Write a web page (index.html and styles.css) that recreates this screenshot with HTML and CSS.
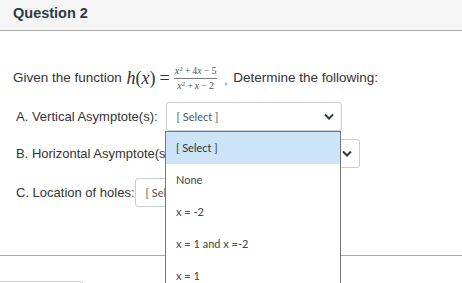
FILE: index.html
```
<!DOCTYPE html>
<html lang="en">
<head>
    <meta charset="UTF-8">
    <title>Question 2</title>
    <link rel="stylesheet" href="styles.css">
</head>
<body>

    <div class="question">
        <div class="question-header">Question 2</div>

        <div class="question-body">
            <p class="statement">Given the function <span class="math"><i>h</i>(<i>x</i>)<b class="eq">=</b></span><span class="frac"><span class="num"><i>x</i><sup>2</sup><b class="op">+</b>4<i>x</i><b class="op">&minus;</b>5</span><span class="den"><i>x</i><sup>2</sup><b class="op">+</b><i>x</i><b class="op">&minus;</b>2</span></span><span class="comma">,</span>Determine the following:</p>

            <div class="row row-a">
                <span class="label">A. Vertical Asymptote(s):</span>
                <div class="select">
                    <span>[ Select ]</span>
                    <svg class="chevron" viewBox="0 0 10 6"><path d="M1 1l4 4 4-4" /></svg>
                </div>
            </div>
            <div class="row row-b">
                <span class="label">B. Horizontal Asymptote(s):</span>
                <div class="select">
                    <span>[ Select ]</span>
                    <svg class="chevron" viewBox="0 0 10 6"><path d="M1 1l4 4 4-4" /></svg>
                </div>
            </div>
            <div class="row row-c">
                <span class="label">C. Location of holes:</span>
                <div class="select">
                    <span>[ Select ]</span>
                    <svg class="chevron" viewBox="0 0 10 6"><path d="M1 1l4 4 4-4" /></svg>
                </div>
            </div>
        </div>
    </div>

    <div class="next-button"></div>

    <!-- open dropdown of the first select -->
    <ul class="dropdown">
        <li class="active">[ Select ]</li>
        <li>None</li>
        <li>x = -2</li>
        <li>x = 1 and x =-2</li>
        <li>x = 1</li>
    </ul>

</body>
</html>
```

FILE: styles.css
```
body {
    margin: 0;
    font-family: "Liberation Sans", Arial, sans-serif;
    color: #333;
    background-color: #fff;
    overflow: hidden;
    height: 283px;
}
.question {
    border-bottom: 1px solid #aaa;
    padding-bottom: 41px;
}
.question-header {
    height: 31px;
    box-sizing: border-box;
    padding: 5px 13px 0;
    background-color: #f5f5f5;
    border-bottom: 1px solid #aaa;
    font-weight: bold;
    font-size: 14.5px;
    color: #2d3b45;
}
.question-body {
    padding: 0 13px;
}
.statement {
    margin: 34px 0 10px;
    height: 26px;
    line-height: 26px;
    font-size: 13.5px;
    white-space: nowrap;
}
.math {
    font-family: "Liberation Serif", serif;
    font-size: 18px;
    margin-left: 1px;
    vertical-align: middle;
}
.math b,
.frac b {
    font-weight: normal;
}
.math .eq {
    margin: 0 4px;
}
.frac {
    display: inline-flex;
    flex-direction: column;
    align-items: center;
    vertical-align: middle;
    font-family: "Liberation Serif", serif;
    font-size: 10px;
    line-height: 10px;
    color: #555;
}
.frac .op {
    margin: 0 2px;
}
.frac sup {
    font-size: 7px;
    line-height: 0;
    vertical-align: 3px;
}
.frac .num {
    border-bottom: 1px solid #777;
    padding: 0 1px 2px;
}
.frac .den {
    padding-top: 2px;
}
.comma {
    margin: 0 6px 0 7px;
    font-size: 10px;
    vertical-align: -2px;
}
.row {
    display: flex;
    align-items: center;
    gap: 4px;
    padding-left: 3px;
    font-size: 13px;
    height: 30px;
    margin-bottom: 7px;
}
.row-a .select {
    margin-left: 4px;
}
.row-b {
    margin-bottom: 9px;
}
.row-b .select {
    margin-left: 6px;
}
.row-c .select {
    margin-left: -4px;
}
.select {
    width: 176px;
    height: 29px;
    box-sizing: border-box;
    border: 1px solid #c7cdd1;
    border-radius: 3px;
    padding: 0 7px 0 10px;
    display: flex;
    align-items: center;
    justify-content: space-between;
    font-family: Lato, sans-serif;
    font-size: 11px;
    color: #555;
}
.chevron {
    width: 10px;
    height: 7px;
    fill: none;
    stroke: #2d3b45;
    stroke-width: 2;
}
.next-button {
    margin-top: 25px;
    width: 83px;
    height: 30px;
    border: 1px solid #c7cdd1;
    border-left: none;
    border-radius: 0 4px 0 0;
}
.dropdown {
    position: absolute;
    left: 165px;
    top: 131px;
    width: 176px;
    margin: 0;
    padding: 0;
    list-style: none;
    box-sizing: border-box;
    background-color: #fff;
    border: 1px solid #767676;
    border-bottom: none;
    font-family: Lato, sans-serif;
    font-size: 11px;
    color: #444;
}
.dropdown li {
    height: 32px;
    line-height: 32px;
    padding-left: 10px;
}
.dropdown .active {
    background-color: #cde3f8;
    color: #333;
}
```
